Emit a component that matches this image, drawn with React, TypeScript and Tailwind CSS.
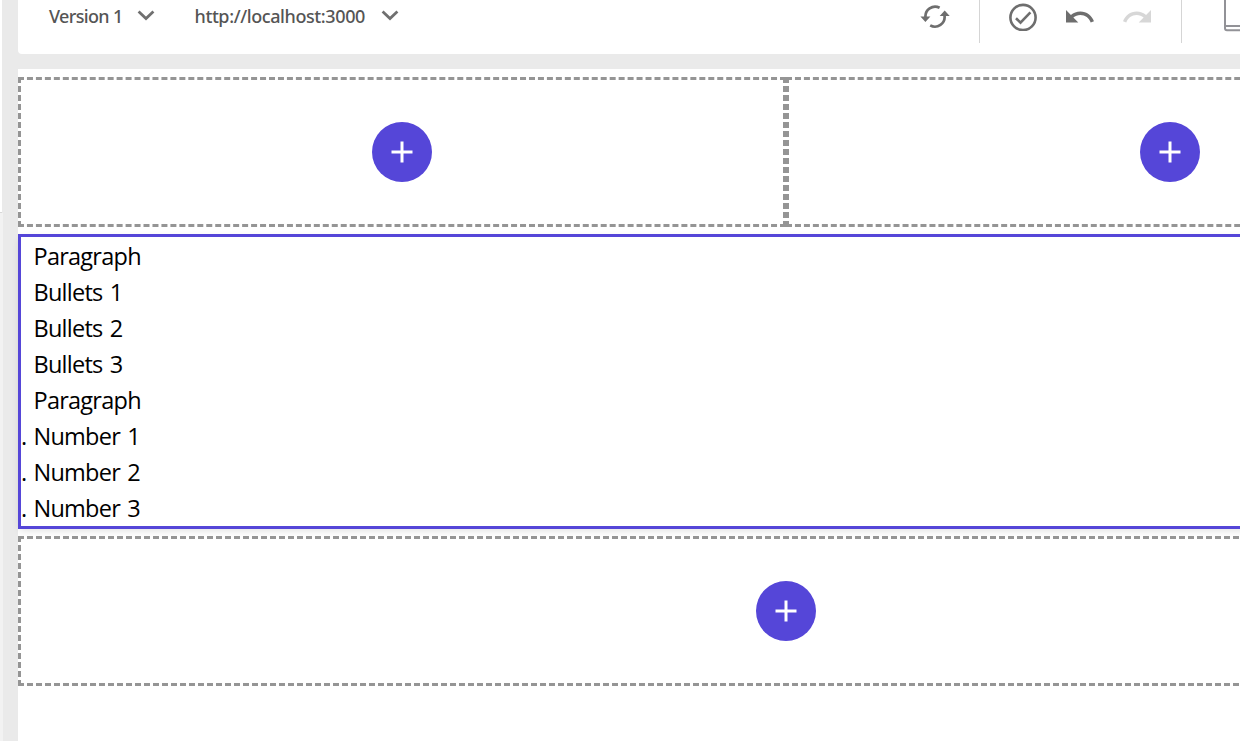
import React from 'react';

function Chevron() {
  return (
    <svg className="block h-[12px] w-[18px] shrink-0" viewBox="0 0 18 12" fill="none" stroke="#707070" strokeWidth="2.8">
      <path d="M1.6 1.6 9 8.6l7.4-7" />
    </svg>
  );
}

function AddButton() {
  return (
    <button className="flex size-[60px] items-center justify-center rounded-full bg-[#5546d8]">
      <svg className="size-[22px]" viewBox="0 0 22 22" fill="none" stroke="#fff" strokeWidth="3">
        <path d="M11 .5v21M.5 11h21" />
      </svg>
    </button>
  );
}

function DropZone() {
  return (
    <div className="flex h-[150px] flex-1 items-center justify-center border-[3px] border-dashed border-[#959595]">
      <AddButton />
    </div>
  );
}

const undoPath =
  'M12.5 8c-2.65 0-5.05.99-6.9 2.6L2 7v9h9l-3.62-3.62c1.39-1.16 3.16-1.88 5.12-1.88 3.54 0 6.55 2.31 7.6 5.5l2.37-.78C21.08 11.03 17.15 8 12.5 8z';

const lines = [
  ['', 'Paragraph'],
  ['', 'Bullets 1'],
  ['', 'Bullets 2'],
  ['', 'Bullets 3'],
  ['', 'Paragraph'],
  ['.', 'Number 1'],
  ['.', 'Number 2'],
  ['.', 'Number 3'],
];

function Toolbar() {
  return (
    <header className="flex h-[54px] w-[1536px] items-start rounded-bl-[4px] bg-white text-[18px] font-medium leading-[24px] text-[#555]">
      <div className="ml-[31px] mt-[4px] flex w-[106px] items-center justify-between">
        <span className="whitespace-nowrap tracking-[-0.65px]">Version 1</span>
        <Chevron />
      </div>
      <div className="ml-[39px] mt-[4px] flex w-[205px] items-center justify-between">
        <span className="whitespace-nowrap pl-[0.5px] tracking-[-0.4px]">http://localhost:3000</span>
        <Chevron />
      </div>
      <svg className="ml-[521px] mt-[4px] h-[26px] w-[30px] shrink-0" viewBox="0 0 30 26" fill="none">
        <path d="M5.5 13.5A9.7 9.7 0 0 1 19.6 3.8M24.5 11.5A9.7 9.7 0 0 1 10.2 21.4" stroke="#6e6e6e" strokeWidth="2.7" />
        <path d="M.4 12.6h10L5.4 18ZM19.7 12h10L24.7 6.6Z" fill="#6e6e6e" />
      </svg>
      <div className="ml-[29px] h-[43px] w-px shrink-0 bg-[#d5d5d5]" />
      <svg className="ml-[29px] mt-[3px] size-[28px] shrink-0" viewBox="0 0 28 28" fill="none" stroke="#6e6e6e" strokeWidth="2.6">
        <circle cx="14" cy="14.5" r="12.6" />
        <path d="m7 15.2 4.5 4.4L21.4 9.4" />
      </svg>
      <svg className="ml-[29px] mt-[10px] h-[12.5px] w-[28px] shrink-0" viewBox="2 7 20.5 9" fill="#6e6e6e">
        <path d={undoPath} />
      </svg>
      <svg className="ml-[29px] mt-[10px] h-[12.5px] w-[28px] -scale-x-100 shrink-0" viewBox="2 7 20.5 9" fill="#d7d7d7">
        <path d={undoPath} />
      </svg>
      <div className="ml-[30px] h-[43px] w-px shrink-0 bg-[#d5d5d5]" />
      <svg className="ml-[41px] h-[32px] w-[40px] shrink-0" viewBox="0 0 40 32" fill="none" stroke="#929297" strokeWidth="2">
        <path d="M2 0v28.3q0 2 2 2h32.7q2 0 2-2V0M2 26h36" />
      </svg>
    </header>
  );
}

export default function App() {
  return (
    <div className="flex h-[741px] w-[1240px] overflow-hidden bg-[#eaeaea] font-['Noto_Sans','Open_Sans',sans-serif]">
      <aside className="w-[3px] shrink-0">
        <div className="h-[213px] w-[2px] border-b border-[#d8d8d8] bg-white" />
        <div className="h-[528px] bg-[#f2f2f2]" />
      </aside>
      <div className="ml-[15px] w-[1536px] shrink-0">
        <Toolbar />
        <main className="mt-[15px] h-[672px] bg-white pt-[8px]">
          <section className="flex">
            <DropZone />
            <DropZone />
          </section>
          <section className="mt-[7px] h-[295px] border-[3px] border-[#5546d8] bg-white pt-px text-[23.5px] leading-[36px] text-black shadow-[0_3px_8px_-2px_rgba(0,0,0,0.14)]">
            {lines.map(([marker, text], i) => (
              <div key={i} className="flex h-[36px] whitespace-nowrap font-['Open_Sans','Noto_Sans',sans-serif]">
                <span className="w-[12.5px] shrink-0">{marker}</span>
                <span className="tracking-[-0.75px] [word-spacing:1.8px]">{text}</span>
              </div>
            ))}
          </section>
          <section className="mt-[7px] flex">
            <DropZone />
          </section>
        </main>
      </div>
    </div>
  );
}
